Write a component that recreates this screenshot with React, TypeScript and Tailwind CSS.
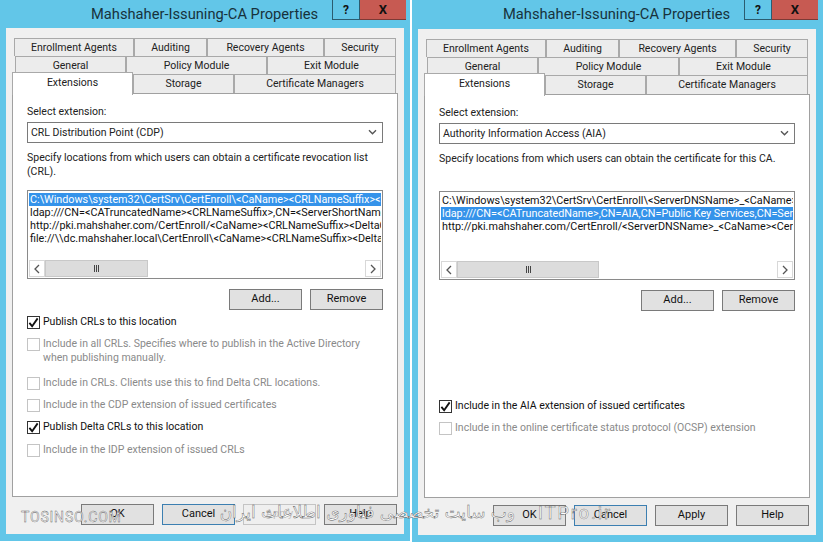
import React from 'react';

const uiFont = { fontFamily: 'Roboto, "Open Sans", sans-serif' };

function DlgButton({ label, active, disabled }: { label: string; active?: boolean; disabled?: boolean }) {
  let look = 'border-[#7a7a7a] bg-[#e1e1e1] text-[#111]';
  if (active) look = 'border-[#3c7fb1] bg-[#e1e1e1] text-[#111]';
  if (disabled) look = 'border-[#c4c4c4] bg-[#efefef] text-[#c4c4c4]';
  return <div className={`flex h-[21px] w-[73px] items-center justify-center border text-[11px] ${look}`}>{label}</div>;
}

function Check({ label, checked, sub }: { label: string; checked?: boolean; sub?: string }) {
  return (
    <div className={`flex items-start gap-[3px] ${checked ? 'text-[#111]' : 'text-[#8a8a8a]'}`}>
      <div className={`mt-[1px] flex h-[13px] w-[13px] shrink-0 items-center justify-center border bg-white ${checked ? 'border-[#333]' : 'border-[#c4c4c4]'}`}>
        {checked && (
          <svg viewBox="0 0 12 12" className="h-[11px] w-[11px]">
            <path d="M1.5 6.5 L4.5 10 L10.5 1.5" fill="none" stroke="#111" strokeWidth="2" />
          </svg>
        )}
      </div>
      <div className="leading-[14px]">
        {label}
        {sub && <div>{sub}</div>}
      </div>
    </div>
  );
}

function TabRow({ tabs, className }: { tabs: [string, number][]; className: string }) {
  return (
    <div className={`flex ${className}`}>
      {tabs.map(([name, w]) => (
        <div key={name} style={{ width: w }} className="flex shrink-0 items-center justify-center border border-b-0 border-[#a9a9a9] bg-[#ececec] text-[#222]">
          {name}
        </div>
      ))}
    </div>
  );
}

function Arrow({ dir }: { dir: 'l' | 'r' }) {
  return (
    <div className="flex w-[16px] shrink-0 items-center justify-center border border-[#d8d8d8] bg-white">
      <svg viewBox="0 0 8 10" className="h-[10px] w-[8px]">
        <path d={dir === 'l' ? 'M6 1 L2 5 L6 9' : 'M2 1 L6 5 L2 9'} fill="none" stroke="#555" strokeWidth="1.3" />
      </svg>
    </div>
  );
}

function Dialog({
  extension, desc, rows, selected, thumb, checks, applyOff, className,
}: {
  extension: string;
  desc: string[];
  rows: string[];
  selected: number;
  thumb: number;
  checks: React.ReactNode;
  applyOff?: boolean;
  className: string;
}) {
  return (
    <div className={`flex shrink-0 flex-col bg-[#62c6e8] ${className}`}>
      <div className="flex flex-1 pl-[91px]">
        <div className="w-[241px] pt-[2px] text-[14.7px] leading-[25px] whitespace-nowrap text-[#17323c]">
          Mahshaher-Issuning-CA Properties
        </div>
        <div className="flex h-[20px]">
          <div className="flex w-[28px] items-center justify-center border border-t-0 border-[#2b5c70] text-[12px] font-bold text-[#111]">?</div>
          <div className="flex w-[46px] items-center justify-center border-b border-[#7c3a36] bg-[#c75a52] text-[13px] font-bold text-[#111]">X</div>
        </div>
      </div>
      <div className="ml-[6px] flex h-[506px] w-[398px] shrink-0 flex-col bg-[#f0f0f0] px-[6px] pt-[10px]">
        <div className="pl-[2px]">
          <TabRow className="h-[18px]" tabs={[['Enrollment Agents', 120], ['Auditing', 73], ['Recovery Agents', 117], ['Security', 72]]} />
          <TabRow className="h-[18px] pl-[1px]" tabs={[['General', 111], ['Policy Module', 141], ['Exit Module', 129]]} />
        </div>
        <div className="flex h-[19px]">
          <div className="z-10 -mt-[2px] flex h-[23px] w-[121px] items-center justify-center border border-b-0 border-[#a9a9a9] bg-white pb-[3px] text-[#222]">Extensions</div>
          <TabRow className="h-[19px]" tabs={[['Storage', 101], ['Certificate Managers', 162]]} />
        </div>
        <div className="flex h-[404px] flex-col border border-[#a0a0a0] bg-white px-[14px] pt-[11px] text-[#222]">
          <div className="leading-[14px]">Select extension:</div>
          <div className="mt-[3px] flex h-[21px] shrink-0 items-center justify-between border border-[#7a7a7a] px-[3px]">
            <span>{extension}</span>
            <svg viewBox="0 0 10 8" className="mr-[2px] h-[7px] w-[9px]">
              <path d="M1 1.5 L5 5.5 L9 1.5" fill="none" stroke="#555" strokeWidth="1.6" />
            </svg>
          </div>
          <div className="mt-[8px] h-[39px] shrink-0 leading-[14px]">
            {desc.map((d) => <div key={d}>{d}</div>)}
          </div>
          <div className="flex h-[89px] shrink-0 flex-col border border-[#8a8a8a] bg-white p-[1px]">
            <div className="flex-1 overflow-hidden pt-[1px] text-[10.8px] leading-[13px] whitespace-nowrap">
              {rows.map((r, i) => (
                <div key={r} className={i === selected ? 'bg-[#3593ea] pl-[1px] text-white' : 'pl-[1px] text-[#111]'}>{r}</div>
              ))}
            </div>
            <div className="flex h-[17px] shrink-0">
              <Arrow dir="l" />
              <div className="flex-1">
                <div style={{ width: thumb }} className="flex h-full items-center justify-center gap-[1px] border border-[#c8c8c8] bg-[#dcdcdc]">
                  <span className="h-[7px] w-[1px] bg-[#444]" />
                  <span className="h-[7px] w-[1px] bg-[#444]" />
                  <span className="h-[7px] w-[1px] bg-[#444]" />
                </div>
              </div>
              <Arrow dir="r" />
            </div>
          </div>
          <div className="mt-[10px] flex justify-end gap-[8px]">
            <DlgButton label="Add..." />
            <DlgButton label="Remove" />
          </div>
          {checks}
        </div>
        <div className="mt-[7px] flex justify-end gap-[8px] pr-[1px]">
          <DlgButton label="OK" />
          <DlgButton label="Cancel" active />
          <DlgButton label="Apply" disabled={applyOff} />
          <DlgButton label="Help" />
        </div>
      </div>
      <div className="h-[7px] shrink-0" />
    </div>
  );
}

export default function App() {
  return (
    <div className="relative h-[543px] w-[823px] overflow-hidden bg-white text-[10.5px]" style={uiFont}>
      <div className="flex gap-[2px]">
        <Dialog
          className="h-[541px] w-[410px]"
          applyOff
          extension="CRL Distribution Point (CDP)"
          desc={['Specify locations from which users can obtain a certificate revocation list', '(CRL).']}
          rows={[
            'C:\\Windows\\system32\\CertSrv\\CertEnroll\\<CaName><CRLNameSuffix><DeltaCRLAllowed>.crl',
            'ldap:///CN=<CATruncatedName><CRLNameSuffix>,CN=<ServerShortName>,CN=CDP',
            'http://pki.mahshaher.com/CertEnroll/<CaName><CRLNameSuffix><DeltaCRLAllowed>.crl',
            'file://\\\\dc.mahshaher.local\\CertEnroll\\<CaName><CRLNameSuffix><DeltaCRLAllowed>.crl',
          ]}
          selected={0}
          thumb={103}
          checks={
            <div className="mt-[5px] flex flex-col">
              <Check checked label="Publish CRLs to this location" />
              <div className="mt-[8px]"><Check label="Include in all CRLs. Specifies where to publish in the Active Directory" sub="when publishing manually." /></div>
              <div className="mt-[11px]"><Check label="Include in CRLs. Clients use this to find Delta CRL locations." /></div>
              <div className="mt-[8px]"><Check label="Include in the CDP extension of issued certificates" /></div>
              <div className="mt-[8px]"><Check checked label="Publish Delta CRLs to this location" /></div>
              <div className="mt-[9px]"><Check label="Include in the IDP extension of issued CRLs" /></div>
            </div>
          }
        />
        <Dialog
          className="h-[542px] w-[411px]"
          extension="Authority Information Access (AIA)"
          desc={['Specify locations from which users can obtain the certificate for this CA.']}
          rows={[
            'C:\\Windows\\system32\\CertSrv\\CertEnroll\\<ServerDNSName>_<CaName><CertificateName>.crt',
            'ldap:///CN=<CATruncatedName>,CN=AIA,CN=Public Key Services,CN=Services,CN=Configuration',
            'http://pki.mahshaher.com/CertEnroll/<ServerDNSName>_<CaName><CertificateName>.crt',
          ]}
          selected={1}
          thumb={142}
          checks={
            <div className="mt-[88px] flex flex-col">
              <Check checked label="Include in the AIA extension of issued certificates" />
              <div className="mt-[8px]"><Check label="Include in the online certificate status protocol (OCSP) extension" /></div>
            </div>
          }
        />
      </div>
      <div className="absolute left-[21px] top-[507px] text-[14px] tracking-[0.8px] text-white [-webkit-text-stroke:0.4px_#555]">TOSINSO.COM</div>
      <div dir="rtl" className="absolute left-[205px] top-[500px] w-[310px] text-[17px] whitespace-nowrap text-white [-webkit-text-stroke:0.4px_#555]" style={{ fontFamily: '"DejaVu Sans", sans-serif' }}>
        وب سایت تخصصی فناوری اطلاعات ایران
      </div>
      <div className="absolute left-[538px] top-[499px] text-[18px] tracking-[2px] text-white [-webkit-text-stroke:0.4px_#555]">ITPro.ir</div>
    </div>
  );
}
